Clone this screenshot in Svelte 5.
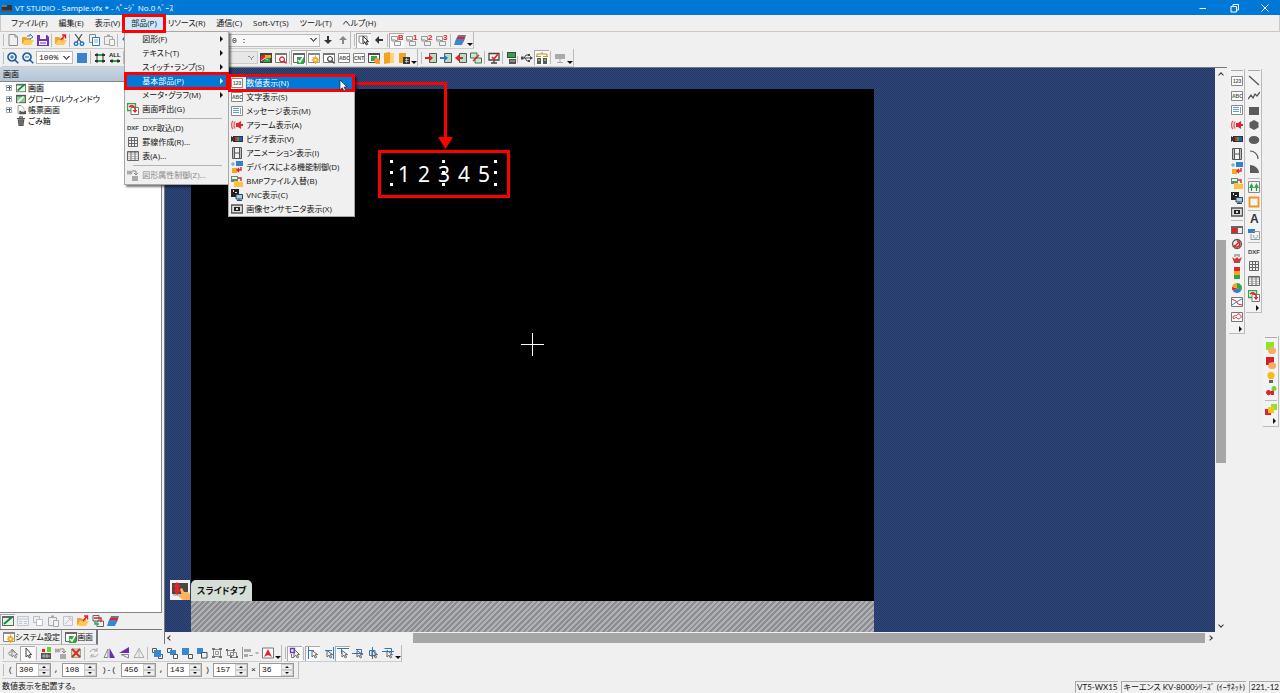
<script lang="ts">
  type Shape = { d?: string; fill?: string; stroke?: string; w?: number; text?: string; x?: number; y?: number; size?: number };

  // shape helpers: fill, line, text
  const f = (d: string, fill: string): Shape => ({ d, fill });
  const l = (d: string, stroke: string, w = 1): Shape => ({ d, fill: 'none', stroke, w });
  const t = (text: string, x: number, y: number, size: number, fill: string): Shape => ({ text, x, y, size, fill });

  const K = '#4d4d4d';
  const G = '#a8a8a8';
  const B = '#2878c8';
  const R = '#e3222b';
  const N = '#2fa544';
  const Y = '#f5a81c';

  const page = l('M2 .5H8L10.5 3V11.5H2ZM8 .5V3H10.5', '#8e8e8e');
  const folder = [f('M0 3H4L5 4H9V6H3L1 10H0Z', '#eda52a'), f('M3 6H12L9 11H1Z', '#ffc95a')];
  const win = (c: string) => [f('M.5 1.5H11.5V10.5H.5Z', '#fff'), l('M.5 1.5H11.5V10.5H.5Z', c), f('M0 1H12V3H0Z', c)];
  const twoPages = (c: string) => [l('M1.5 1.5H7.5V7.5H1.5Z', c), f('M4.5 4.5H10.5V10.5H4.5Z', '#fff'), l('M4.5 4.5H10.5V10.5H4.5Z', c)];
  const cursor = (c: string) => l('M5 2V10L7 8.2L8.3 11L9.6 10.3L8.3 7.6H10.6Z', c);
  const magnifier = [l('M5 1A4 4 0 1 0 5.01 1M8 8L11.3 11.3', '#1c5fa0', 1.6)];
  const screens = (n: string) => [
    l('M.5 2.5H6.5V6.5H.5ZM3.5 7.5H9.5V11.5H3.5Z', '#999'),
    f('M1 5H4V8H1Z', '#bbb'),
    t(n, 7, 6, 8, R),
  ];
  const stack = (a: string, b: string) => [f('M1 1H7V7H1Z', a), f('M5.5 5.5H11V11H5.5Z', b), l('M5.5 5.5H11V11H5.5Z', K)];
  const alignTo = (d: string) => [l(d, B), l('M5 3.5V10L7 8.2L8.3 11L9.6 10.3L8.3 7.6H10.6Z', '#666')];
  const label = (s: string, x: number) => [f('M.5 1.5H11.5V10.5H.5Z', '#fff'), l('M.5 1.5H11.5V10.5H.5Z', '#888'), t(s, x, 8, 5, '#555')];
  const terminal = [l('M4.5 1.5H11.5V10.5H4.5Z', '#555'), f('M5 2H11V10H5Z', '#b8dcc0')];

  const icons: Record<string, Shape[]> = {
    app: [f('M1 3H11V9H1Z', '#333'), f('M1 3H6V5H1Z', '#777'), f('M0 8H12V10H0Z', '#555')],
    minimize: [l('M2.5 6.5H9', '#fff')],
    restore: [l('M3 4.5H8.5V10H3ZM5 4.5V2.5H10.5V8H8.5', '#fff')],
    close: [l('M2.5 2.5L9.5 9.5M9.5 2.5L2.5 9.5', '#fff')],
    new: [page],
    open: [...folder, l('M5 2H8V0L11 3L8 5', B)],
    save: [f('M0 1H10L12 3V12H0Z', '#6e36b4'), f('M3 1H9V5H3ZM2 7H10V11H2Z', '#f6f1fb'), l('M3 9H9', '#6e36b4')],
    import: [...folder, l('M6 6L10 1M7 1H10.5V4.5', R, 1.4)],
    cut: [l('M2 0L8 8M9 0L4 8', K, 1.2), l('M3 8A1.7 1.7 0 1 0 3.01 8M9 8A1.7 1.7 0 1 0 9.01 8', B, 1.4)],
    copy: [l('M1.5.5H7.5V8.5H1.5Z', '#8a8a8a'), f('M4.5 3.5H11.5V11.5H4.5Z', '#fff'), l('M4.5 3.5H11.5V11.5H4.5Z', B), l('M6 6H10M6 8H10', '#8ab')],
    paste: [l('M1.5 2.5H9.5V10.5H1.5Z', G), l('M4 1.5H7', G, 2), f('M6.5 5.5H11.5V11.5H6.5Z', '#f4f4f4'), l('M6.5 5.5H11.5V11.5H6.5Z', G)],
    undo: [l('M10 10C11 4 6 3 2 5M5 2L2 5L5 8', B, 1.4)],
    redo: [l('M2 10C1 4 6 3 10 5M7 2L10 5L7 8', B, 1.4)],
    down: [l('M6 2V7', '#333', 2), f('M2 6H10L6 10Z', '#333')],
    up: [l('M6 10V5', '#888', 2), f('M2 6H10L6 2Z', '#888')],
    left: [l('M10 6H5', '#333', 2), f('M6 2V10L2 6Z', '#333')],
    picker: [l('M1 2H9V8M1 2V8L4 10', '#888'), cursor('#333'), l('M4 5L10 11', '#777')],
    screenB: screens('B'),
    screen1: screens('1'),
    screen2: screens('2'),
    screen3: screens('3'),
    layers: [f('M4 1H12L10 7H2Z', '#777'), f('M3 3H11L9 9H1Z', R), f('M2 5H10L8 11H0Z', '#3688d4')],
    zoomin: [...magnifier, l('M3 5H7M5 3V7', '#1c5fa0')],
    zoomout: [...magnifier, l('M3 5H7', '#1c5fa0')],
    blue: [f('M1 1H11V11H1Z', '#3c82cf')],
    fit: [l('M1 3H4M8 3H11M1 9H4M8 9H11', '#333', 2), l('M4 3H8M4 9H8', N, 2), l('M3 1V11M9 1V11', '#333')],
    all: [t('ALL', 0, 5, 6, '#222'), l('M1 9H4M8 9H11', '#333', 2), l('M4 9H8', N, 2), l('M3 7V11M9 7V11', '#333')],
    color: [f('M0 1H12V11H0Z', '#454545'), f('M1 4L5 2V8H1Z', R), f('M5 3H11V6H5Z', Y), f('M5 7L10 6V10H3Z', N), l('M1 9L5 6L8 8', '#fff', .8)],
    find: [...win('#777'), l('M7 5A2.4 2.4 0 1 0 7.01 5M9 9L11.5 11.5', R, 1.3)],
    check: [...win('#666'), f('M4 5H11V12H4Z', N), l('M5 8L7 10L10 5', '#fff', 1.5)],
    gear: [...win('#888'), l('M7.5 6A2 2 0 1 0 7.51 6', Y, 1.8), l('M7.5 3.5V5M7.5 11V12M3.5 8H5M10 8H12M4.5 5L5.5 6M9.5 10L10.5 11', Y)],
    search: [...win('#777'), l('M7 4.5A2.4 2.4 0 1 0 7.01 4.5M9 9L11.5 11.5', '#444', 1.2)],
    abc: label('ABC', 1),
    cnt: label('CNT', 1),
    num: label('123', 2),
    touch: [...win(K), f('M3 4H9V9H3Z', N), f('M7 6H10L12 8V12H8L6 9Z', '#f79a35')],
    book: [f('M1 1L7 0V11L1 12Z', '#f2a41f'), f('M7 1H11V11H7Z', '#ffd27a')],
    locked: [f('M1 1H8V11H1Z', '#f2a41f'), f('M5 5H12V12H5Z', '#3b3b3b'), l('M7 7.5H10.5M7 9.5H10.5M8.5 6V11', '#ddd', .7)],
    toIn: [...terminal, l('M0 6H5', R, 2), f('M4 2.5L8 6L4 9.5Z', R)],
    toOut: [...terminal, l('M0 6H5', B, 2), f('M4 2.5L8 6L4 9.5Z', B)],
    fromIn: [...terminal, l('M3 6H8', R, 2), f('M4 2.5L0 6L4 9.5Z', R)],
    verify: [f('M1 1H7V6H1ZM5 6H11V11H5Z', '#cde8d1'), l('M.5 1H7V6H.5ZM5 6H11.5V11H5Z', '#3f6f50'), l('M3 9L9 3', R, 1.4)],
    monitor: [l('M1 1.5H11V8H1ZM6 8V11M3 11H9', '#444', 1.3), l('M4 5L6 7L10 2', R, 1.6)],
    transfer: [f('M1 0H10V6H1Z', '#444'), f('M2 1H9V5H2Z', N), f('M3 7H10V12H3Z', '#555'), l('M4 9H9M11.5 4V11', '#bbb')],
    usb: [l('M0 6H10M3 6L5 3H8M4 6L6 9H8', '#444'), f('M9 4L12 6L9 8ZM0 4.5H2.5V7.5H0ZM7 2H9V4H7ZM7 8H9V10H7Z', '#444')],
    lan: [l('M1 4V2H11V4M6 2V0M0 4.5H5M7 4.5H12', '#c29328'), f('M1 6H5V12H1ZM7 6H11V12H7Z', '#4d5f4f'), l('M2 8H4M8 8H10', '#ddd')],
    device: [f('M1 2H11V7H1Z', '#aaa'), l('M6 7V10M3 10.5H9', '#aaa')],
    message: [f('M.5 1.5H11.5V10.5H.5Z', '#fff'), l('M.5 1.5H11.5V10.5H.5Z', '#888'), l('M2 3.5H8M2 5.5H8M2 7.5H8', '#5b9bd8'), l('M9.5 3V9', '#999')],
    alarm: [l('M2 2C0 4 0 8 2 10M4 2.5C2.5 5 2.5 7 4 9.5', '#ef5a60', 1.4), f('M5 4H7L10 2V10L7 8H5ZM10 5H12V7H10Z', R)],
    video: [f('M0 3L3 5V7L0 9ZM2 3H12V9H2Z', '#333'), f('M4 4H6V8H4Z', R), f('M6 4H8.5V8H6Z', N), f('M8.5 4H11V8H8.5Z', '#2656d0')],
    film: [l('M1.5.5H10.5V11.5H1.5ZM3.5.5V11.5M8.5.5V11.5M3.5 6H8.5', '#555'), l('M2.5 1V11M9.5 1V11', '#999', .6)],
    deviceCtl: [f('M5 0H12V5H5Z', '#2f82d2'), f('M1 7H6V12H1Z', '#f5a81c'), l('M0 3H4M2 1V5', '#5b9bd8'), l('M10 6V9H6M8 7L6 9L8 11', R, 1.4)],
    bmp: [f('M0 1H7V7H0Z', '#5c8f63'), f('M1 2H6V4H1Z', '#eef'), f('M3 6H7L8 7H12V12H3Z', '#ffc13c'), l('M7 3H10V6', R, 1.4)],
    vnc: [f('M0 0H8V8H0Z', '#222'), f('M2 1H3V3H2ZM4 3H6V4H4Z', '#ddd'), f('M5 5H12V10H5Z', '#9fd0ea'), l('M5 5.5H11.5V10H5ZM8 10V12M6 11.5H11', '#345')],
    sensor: [f('M.5 2H11.5V10H.5Z', '#ddd'), l('M.5 2H11.5V10H.5Z', '#555', 1.3), f('M3 4H9V8H3Z', '#222'), f('M5 5H7V7H5Z', '#ddd')],
    callScreen: [l('M.5.5H8.5V7.5H.5Z', N, 1.3), f('M4 4.5H11.5V11.5H4Z', '#fff'), l('M4 4.5H11.5V11.5H4Z', '#777'), l('M2 4C6 1 9 5 8 8', R, 1.5), f('M5.5 7H10.5L8 10Z', R)],
    dxf: [t('DXF', 0, 8, 6, '#444')],
    grid: [l('M1.5 1.5H10.5V10.5H1.5ZM4.5 1V11M7.5 1V11M1 4.5H11M1 7.5H11', '#666')],
    table: [f('M1 1H11V3H1Z', '#aaa'), l('M.5 1.5H11.5V10.5H.5ZM4 1V11M8 1V11', '#666'), l('M1 4H11M1 6.5H11M1 8.5H11', '#999', .6)],
    attr: [f('M2 2A2 2 0 1 1 2 5A2 2 0 1 1 2 2M5 7H11V12H5Z', '#aaa'), l('M5 2H9V5M7 4L9 6L11 4', '#888')],
    screenEdit: [f('M0 1H12V11H0Z', '#666'), f('M1 3H11V10H1Z', '#e2f8e5'), l('M2 9L10 2', '#168b38', 2)],
    screenEditAlt: [f('M0 1H12V11H0Z', '#555'), f('M1 3H11V10H1Z', '#7ed28c'), l('M2 10L9 3', '#fff', 2)],
    report: [l('M2.5.5H6L9.5 4V10.5H2.5Z', '#888'), f('M4 7H12V11H4Z', '#555'), f('M6 5H10V8H6Z', '#eee')],
    trash: [f('M2 4H10L9 12H3Z', '#555'), l('M1 3H11M4.5 2.5V1H7.5V2.5', '#555', 1.3), l('M4.5 5V11M6 5V11M7.5 5V11', '#999', .6)],
    listOff: [l('M.5 1.5H11.5V10.5H.5ZM1 4H11M2 6.5H5M2 8.5H5M7 6.5H10M7 8.5H10', '#c0c7d4')],
    pagesOff: twoPages('#b7bccb'),
    editOff: [l('M1.5 1.5H10.5V10.5H1.5ZM3 9L9 3M6 3H9V6', '#c0c4cf')],
    swap: [l('M1 .5H7V6H1ZM5 6H11.5V11.5H5Z', '#666'), l('M2 3H9V7', R, 1.4), l('M3 6V9H7', N, 1.4)],
    pointOff: [l('M1 7L5 3L8 6M2 8H5', G, 1.5), cursor('#888')],
    point: [l('M4 1V10L6 8.2L7.3 11L8.6 10.3L7.3 7.6H9.6Z', '#444')],
    addParts: [f('M1 6H11V12H1Z', '#555'), f('M2 2H5V5H2Z', R), f('M7 0H11V5H7Z', '#6bd02c'), l('M2 9H10M4 7V11M7 7V11', '#ddd', .7)],
    del: [f('M1 2H11V11H1Z', '#c6e4b8'), l('M1.5 2H10.5V10.5H1.5Z', '#9a8'), l('M2 2L10 10M10 2L2 10', R, 1.8)],
    rotate: [l('M2 5C4 1 8 2 9 4M10 7C8 11 4 10 3 8M9 1V4H6M3 11V8H6', G)],
    flipH: [l('M5 2V10.5H1Z', '#888'), f('M6.5 1V11H12Z', '#6a2db2')],
    flipV: [f('M11 0V6H1Z', '#6a2db2'), l('M10.5 7.5V11L3 7.5Z', '#888')],
    triangle: [l('M6 1.5L11 10.5H1Z', '#aaa'), l('M6 1V11', '#bbb')],
    stackFront: [l('M1.5 1.5H5.5V5.5H1.5ZM7.5 7.5H11.5V11.5H7.5Z', '#555'), f('M3 3H10V10H3Z', '#3688d4')],
    stackBack: [f('M1 1H8V8H1Z', '#3688d4'), f('M7 7H11V11H7Z', '#fff'), l('M7.5 7.5H11.5V11.5H7.5Z', '#555')],
    stackUp: [l('M1.5 1.5H5.5V5.5H1.5Z', '#555'), f('M4 3H10V8H4Z', '#3688d4'), f('M7 7H11V11H7Z', '#fff'), l('M7.5 7.5H11.5V11.5H7.5Z', '#555')],
    stackDown: stack('#3688d4', '#f0f0f0'),
    group: [l('M2.5 2.5H9.5V9.5H2.5Z', '#888'), f('M1 1H4V3H1ZM8 1H11V3H8ZM1 9H4V11H1ZM8 9H11V11H8Z', '#777'), l('M4.5 4.5H7.5V7.5H4.5Z', '#999')],
    ungroup: [l('M1.5 3.5H7.5V8.5H1.5ZM4.5 5.5H10.5V10.5H4.5Z', '#888'), f('M0 2H2V4H0ZM7 2H9V4H7ZM10 9H12V11H10ZM4 9H6V11H4Z', '#666')],
    alignOff: [l('M1.5 0V12', '#999'), f('M3 2H10V5H3ZM3 7H7V10H3Z', '#aaa'), l('M8 8.5H12', '#999')],
    mini: [f('M3 5H9V7H3Z', '#777')],
    alert: [f('M.5 1H11.5V11H.5Z', '#fff'), l('M.5 1H11.5V11H.5Z', '#777'), f('M6 2L8 6L10 10L6 8L2 10L4 6Z', R)],
    purplePick: [l('M1.5 1.5H5.5V5.5H1.5Z', '#6a2ddd', 1.3), l('M2.5 7V10.5H5', '#777'), cursor('#666')],
    alignL: alignTo('M1.5 0V12M2 3.5H7'),
    alignR: alignTo('M11.5 0V12M3 3.5H10'),
    alignT: alignTo('M0 1.5H12M4.5 2V7'),
    alignM: alignTo('M0 6.5H11M4 2.5H9.5V6'),
    alignC: alignTo('M5.5 0V12M2.5 3.5H8V8.5H2.5Z'),
    alignB: alignTo('M0 4.5H12M2.5 1.5H9.5V6'),
    line: [l('M1 1L11 10', '#555', 1.3)],
    poly: [l('M0 9L3 5L5 8L7 4L9 6L12 2', '#555', 1.3)],
    rect: [f('M1 2H11V10H1Z', '#5c5c5c')],
    hexagon: [f('M6 1L10.5 3.5V8.5L6 11L1.5 8.5V3.5Z', '#5c5c5c')],
    ellipse: [f('M6 2C13 2 13 10 6 10C-1 10 -1 2 6 2Z', '#5c5c5c')],
    arc: [l('M2 2C6 2 10 5 10 10', '#555', 1.2)],
    sector: [f('M2 2C7 2 11 6 11 10H2Z', '#5c5c5c')],
    switches: [l('M.5.5H11.5V11.5H.5Z', '#888'), l('M3.5 4V10M8.5 4V10', '#2b8b3d', 1.2), f('M1 7L3.5 2L6 7L8.5 2L11 7Z', N)],
    frame: [l('M1.5 1.5H10.5V10.5H1.5Z', '#ee9420', 1.8)],
    letter: [t('A', 2, 10, 12, '#333')],
    imageFile: [f('M0 1H7V5H0Z', '#2f7fd0'), l('M5 3.5H11.5V11.5H3V6', '#999'), l('M6 7A2 2 0 1 0 9 7', '#8ab')],
    lamp: [f('M0 2H12V10H0Z', '#666'), f('M1 4H6V9H1Z', R), f('M7 4H11V9H7Z', '#eee')],
    meter: [l('M6 1.5A4.5 4.5 0 1 0 6.01 1.5', '#555', 1.3), l('M6 3A3 3 0 1 1 3 7M4 8L8 4', R, 1.6)],
    gauge: [f('M1 4L3 9H9L11 4L8 6L6 4L4 6Z', '#d33'), l('M3 9.5H9M4 1V4M8 1V4M6 1V3', '#666')],
    level: [f('M3 0H9V4H3Z', R), f('M3 4H9V8H3Z', Y), f('M3 8H9V12H3Z', N)],
    pie: [f('M6 6V1A5 5 0 0 1 10.5 8Z', N), f('M6 6L10.5 8A5 5 0 0 1 2 9Z', '#2f7fd0'), f('M6 6L2 9A5 5 0 0 1 1 5Z', R), f('M6 6L1 5A5 5 0 0 1 6 1Z', Y)],
    trend: [f('M.5 1.5H11.5V10.5H.5Z', '#fff'), l('M.5 1.5H11.5V10.5H.5Z', '#777'), l('M1 3L5 5L7 8L11 9', R), l('M1 9L4 7L7 5L11 3', '#2f7fd0')],
    xy: [f('M.5 1.5H11.5V10.5H.5Z', '#fff'), l('M.5 1.5H11.5V10.5H.5Z', '#777'), l('M2 7C2 3 5 6 6 4S9 3 10 5S7 9 6 7S3 9 2 7', R)],
    handGreen: [f('M1 0H9V8H1Z', '#8be62a'), f('M4 6L8 5L11 7V10L9 12H5L3 10Z', '#f8ac64')],
    handRed: [f('M1 0H9V8H1Z', '#d51f29'), f('M4 6L8 5L11 7V10L9 12H5L3 10Z', '#f8ac64')],
    bulb: [f('M6 1C11 1 10 6 8 8H4C2 6 1 1 6 1Z', '#f7bd16'), f('M4 9H8V12H4Z', '#666')],
    lamps: [l('M3 9L10 3', '#777', 2), f('M3.5 4A2.5 2.5 0 1 0 3.51 4M6 5H9V9H6Z', R), f('M9 0A2.5 2.5 0 1 0 9.01 0', '#72d334')],
    squares: [f('M6 0H12V6H6Z', '#8be62a'), f('M0 5H6V11H0Z', R), f('M3 3H9V9H3Z', '#f7c516')],
  };

  type Tool = string | { i: string; on: boolean };
  const on = (i: string) => ({ i, on: true });
  const SEP = '|';
  const MORE = 'v';

  const fileBar: Tool[] = ['new', 'open', 'save', SEP, 'import', SEP, 'cut', 'copy', 'paste', SEP, 'undo', 'redo', 'find', SEP, 'copy', 'paste', 'grid', 'table'];
  const pageBar: Tool[] = ['down', 'up'];
  const screenBar: Tool[] = [on('picker'), 'left', SEP, on('screenB'), 'screen1', 'screen2', 'screen3', SEP, 'layers', MORE];
  const viewBar: Tool[] = ['blue', SEP, 'fit', 'all', SEP, 'grid', 'table', 'find', 'search', 'abc', 'cnt'];
  const showBar: Tool[] = ['color', 'find', SEP, on('check'), on('gear'), 'search', 'abc', 'cnt', 'touch', 'book', 'locked', MORE];
  const transferBar: Tool[] = ['toIn', 'toOut', 'fromIn', 'verify', SEP, 'monitor', SEP, 'transfer', 'usb', on('lan'), SEP, 'device', MORE];
  const editBar: Tool[] = ['pointOff', on('point'), SEP, 'addParts', 'attr', 'del', SEP, 'rotate', 'flipH', 'flipV', 'triangle', SEP, 'stackFront', 'stackUp', 'stackBack', 'stackDown', 'group', 'ungroup', 'alignOff', 'mini', 'alert', MORE];
  const alignBar: Tool[] = [on('purplePick'), SEP, on('alignL'), 'alignR', on('alignT'), 'alignM', 'alignC', 'alignB', MORE];
  const treeBar: Tool[] = [on('screenEdit'), 'listOff', 'pagesOff', 'paste', 'editOff', 'import', 'swap', 'layers'];

  const partsPalette: Tool[] = ['num', 'abc', 'message', 'alarm', 'video', 'film', 'deviceCtl', 'bmp', 'vnc', 'sensor', SEP, 'lamp', 'meter', 'gauge', 'level', 'pie', 'trend', 'xy', '>'];
  const shapePalette: Tool[] = ['line', 'poly', 'rect', 'hexagon', 'ellipse', 'arc', 'sector', SEP, 'switches', 'frame', SEP, 'letter', 'imageFile', SEP, 'dxf', 'grid', 'table', 'callScreen', '>'];
  const lampPalette: Tool[] = ['handGreen', 'handRed', 'bulb', 'lamps', SEP, 'squares', '>'];

  const menus = ['ファイル(F)', '編集(E)', '表示(V)', '部品(P)', 'リソース(R)', '通信(C)', 'Soft-VT(S)', 'ツール(T)', 'ヘルプ(H)'];

  const partsMenu = [
    { label: '図形(F)', sub: true },
    { label: 'テキスト(T)', sub: true },
    { label: 'スイッチ・ランプ(S)', sub: true },
    { label: '基本部品(P)', sub: true, open: true },
    { label: 'メータ・グラフ(M)', sub: true },
    { label: '画面呼出(G)', icon: 'callScreen' },
    null,
    { label: 'DXF取込(D)', icon: 'dxf' },
    { label: '罫線作成(R)...', icon: 'grid' },
    { label: '表(A)...', icon: 'table' },
    null,
    { label: '図形属性制御(Z)...', icon: 'attr', disabled: true },
  ];

  const basicParts = [
    ['num', '数値表示(N)'],
    ['abc', '文字表示(S)'],
    ['message', 'メッセージ表示(M)'],
    ['alarm', 'アラーム表示(A)'],
    ['video', 'ビデオ表示(V)'],
    ['film', 'アニメーション表示(I)'],
    ['deviceCtl', 'デバイスによる機能制御(D)'],
    ['bmp', 'BMPファイル入替(B)'],
    ['vnc', 'VNC表示(C)'],
    ['sensor', '画像センサモニタ表示(X)'],
  ];

  const tree = [
    { icon: 'screenEdit', label: '画面', expand: true, current: true },
    { icon: 'screenEditAlt', label: 'グローバルウィンドウ', expand: true },
    { icon: 'report', label: '帳票画面', expand: true },
    { icon: 'trash', label: 'ごみ箱' },
  ];

  const coords = [
    { before: '(', value: 300, name: 'X1' },
    { before: ',', value: 108, name: 'Y1' },
    { before: ')-(', value: 456, name: 'X2', wide: true },
    { before: ',', value: 143, name: 'Y2' },
    { before: ')', value: 157, name: 'W' },
    { before: '×', value: 36, name: 'H' },
  ];

  let selected = $state(0);
</script>

{#snippet icon(name: string)}
  <svg class="icon" viewBox="0 0 12 12" aria-hidden="true">
    {#each icons[name] as s}
      {#if s.text}
        <text x={s.x} y={s.y} font-size={s.size} fill={s.fill}>{s.text}</text>
      {:else}
        <path d={s.d} fill={s.fill} stroke={s.stroke} stroke-width={s.w} />
      {/if}
    {/each}
  </svg>
{/snippet}

{#snippet tools(list: Tool[])}
  {#each list as tool}
    {#if tool === SEP}
      <span class="sep"></span>
    {:else if tool === MORE}
      <button class="more" aria-label="more"></button>
    {:else if tool === '>'}
      <button class="more side" aria-label="more"></button>
    {:else if tool === 'mini'}
      <button class="tool mini" aria-label="mini">{@render icon('mini')}</button>
    {:else if typeof tool === 'string'}
      <button class="tool" aria-label={tool}>{@render icon(tool)}</button>
    {:else}
      <button class="tool on" aria-label={tool.i}>{@render icon(tool.i)}</button>
    {/if}
  {/each}
{/snippet}

<div class="app">
  <header class="title">
    {@render icon('app')}
    <span class="name">VT STUDIO - Sample.vfx * - ﾍﾟｰｼﾞ No.0 ﾍﾞｰｽ</span>
    <button aria-label="minimize">{@render icon('minimize')}</button>
    <button aria-label="restore">{@render icon('restore')}</button>
    <button aria-label="close">{@render icon('close')}</button>
  </header>

  <nav class="menubar">
    {#each menus as label, i}
      <div class="menu" class:open={i === 3} class:marked={i === 3}>
        <button>{label}</button>
        {#if i === 3}
          <ul class="popup">
            {#each partsMenu as item}
              {#if item}
                <li class:marked={item.open}>
                  <button class:active={item.open} disabled={item.disabled}>
                    <span class="slot">{#if item.icon}{@render icon(item.icon)}{/if}</span>
                    <span>{item.label}</span>
                    {#if item.sub}<i class="arrow"></i>{/if}
                  </button>
                  {#if item.open}
                    <ul class="popup sub">
                      {#each basicParts as [name, text], n}
                        <li class:marked={n === 0}>
                          <button class:active={n === selected} onmouseenter={() => (selected = n)}>
                            <span class="slot plain">{@render icon(name)}</span>
                            <span>{text}</span>
                          </button>
                          {#if n === 0}
                            <svg class="pointer" viewBox="0 0 9 13">
                              <path d="M1 1V11L3.3 8.8L5 12L6.6 11.2L5 8H8Z" fill="#fff" stroke="#222" stroke-width=".7" />
                            </svg>
                          {/if}
                        </li>
                      {/each}
                    </ul>
                  {/if}
                </li>
              {:else}
                <li class="rule"></li>
              {/if}
            {/each}
          </ul>
        {/if}
      </div>
    {/each}
  </nav>

  <div class="row">
    <div class="bar">
      {@render tools(fileBar)}
      <select class="page-select" aria-label="page"><option>0 :</option></select>
      {@render tools(pageBar)}
    </div>
    <div class="bar">{@render tools(screenBar)}</div>
  </div>
  <div class="row">
    <div class="bar">
      <button class="tool" aria-label="zoom in">{@render icon('zoomin')}</button>
      <button class="tool" aria-label="zoom out">{@render icon('zoomout')}</button>
      <select class="zoom-select" aria-label="zoom"><option>100%</option></select>
      {@render tools(viewBar)}
      <select class="state-select" aria-label="state" disabled><option></option></select>
      {@render tools(showBar)}
    </div>
    <div class="bar">{@render tools(transferBar)}</div>
  </div>

  <main>
    <aside class="explorer">
      <h2>画面</h2>
      <ul class="tree">
        {#each tree as node}
          <li class:current={node.current}>
            <span class="expand" class:shown={node.expand}></span>
            {@render icon(node.icon)}
            <span>{node.label}</span>
          </li>
        {/each}
      </ul>
      <div class="tree-tools">{@render tools(treeBar)}</div>
      <div class="tabs">
        <button>{@render icon('gear')}システム設定</button>
        <button class="current">{@render icon('check')}画面</button>
      </div>
    </aside>

    <section class="workspace">
      <div class="viewport">
        <div class="screen">
          <div class="number-part">
            {#each '12345' as digit}<span>{digit}</span>{/each}
            <svg class="handles" viewBox="0 0 107 28">
              {#each [0, 52, 104] as x}
                {#each [1, 12, 24] as y}
                  <rect {x} {y} width="3" height="3" fill="#fff" />
                {/each}
              {/each}
            </svg>
          </div>
          <svg class="cross" viewBox="0 0 23 23"><path d="M11.5 0V23M0 11.5H23" stroke="#fff" /></svg>
          <div class="slide-tab">
            <span class="slide-icon">
              <svg viewBox="0 0 20 20">
                <path d="M2 3H18V14H2Z" fill="#484848" />
                <path d="M3 15H18" stroke="#888" />
                <path d="M7 2L11 7H9V10H11L7 15L3 10H5V7H3Z" fill="#e3222b" />
                <path d="M10 9L12 8L14 12H18L20 14V20H13L8 16L9 15L12 16Z" fill="#ffb45a" />
              </svg>
            </span>
            <button>スライドタブ</button>
          </div>
        </div>
        <div class="hatch"></div>
        <svg class="callout" viewBox="0 0 110 82">
          <path d="M0 15.5H91.5V70" fill="none" stroke="#f00" stroke-width="3" />
          <path d="M84 69H99L91.5 81Z" fill="#f00" />
        </svg>
      </div>
      <div class="scroll vertical">
        <i class="chev up"></i>
        <div class="track"><span class="thumb"></span></div>
        <i class="chev down"></i>
      </div>
      <div class="scroll horizontal">
        <i class="chev left"></i>
        <div class="track"><span class="thumb"></span></div>
        <i class="chev right"></i>
      </div>
    </section>

    <aside class="dock">
      <div class="palette parts">{@render tools(partsPalette)}</div>
      <div class="palette shapes">{@render tools(shapePalette)}</div>
      <div class="palette lamps">{@render tools(lampPalette)}</div>
    </aside>
  </main>

  <div class="row">
    <div class="bar">{@render tools(editBar)}</div>
    <div class="bar">{@render tools(alignBar)}</div>
  </div>
  <div class="row">
    <div class="bar coords">
      {#each coords as c}
        <span class="mark" class:wide={c.wide}>{c.before}</span>
        <span class="spin">
          <input type="text" aria-label={c.name} value={c.value} />
          <span class="steps">
            <button aria-label="increase {c.name}"></button>
            <button aria-label="decrease {c.name}"></button>
          </span>
        </span>
      {/each}
    </div>
  </div>

  <footer>
    <span class="hint">数値表示を配置する。</span>
    <span class="cell">VT5-WX15</span>
    <span class="cell">キーエンス KV-8000ｼﾘｰｽﾞ (ｲｰｻﾈｯﾄ)</span>
    <span class="cell">221,-12</span>
  </footer>
</div>

<style>
  :global(body) {
    margin: 0;
  }

  .app {
    display: flex;
    flex-direction: column;
    height: 100vh;
    min-height: 480px;
    overflow: hidden;
    background: #f0f0f0;
    color: #111;
    font: 8px/14px 'Open Sans', 'Noto Sans CJK JP', sans-serif;
    font-feature-settings: 'palt';
  }

  button,
  input,
  select {
    font: inherit;
    font-feature-settings: inherit;
    color: inherit;
    padding: 0;
    margin: 0;
    border: 0;
    background: none;
    box-sizing: border-box;
  }

  ul {
    list-style: none;
    margin: 0;
    padding: 0;
  }

  .icon {
    width: 12px;
    height: 12px;
    flex: none;
    display: block;
  }

  .icon text {
    font-family: 'Liberation Sans', sans-serif;
    font-weight: bold;
  }

  .title {
    display: flex;
    align-items: center;
    height: 15px;
    padding-left: 1px;
    background: #0078d7;
    color: #fff;
  }

  .title .name {
    flex: 1;
    padding-left: 2px;
  }

  .title button {
    display: grid;
    place-items: center;
    width: 31px;
    height: 15px;
  }

  .menubar {
    display: flex;
    height: 17px;
    box-sizing: border-box;
    padding-left: 5px;
    border: solid #c8c8c8;
    border-width: 0 1px 1px;
  }

  .menu {
    position: relative;
  }

  .menu > button {
    height: 16px;
    padding: 0 6px 0 5px;
    white-space: nowrap;
  }

  .menu.open > button {
    background: #cce8ff;
  }

  .marked {
    position: relative;
  }

  .marked::after {
    content: '';
    position: absolute;
    inset: -2px -1px;
    border: 3px solid #f00;
    pointer-events: none;
    z-index: 3;
  }

  .menu.marked::after {
    inset: -1px -3px -2px -4px;
  }

  .popup {
    position: absolute;
    top: 100%;
    left: -2px;
    z-index: 2;
    width: 105px;
    box-sizing: border-box;
    padding-bottom: 2px;
    border: 1px solid #a8a8a8;
    background: #f0f0f0;
    box-shadow: 2px 2px 2px #0008;
  }

  .popup button {
    display: flex;
    align-items: center;
    width: 100%;
    height: 14px;
    text-align: left;
    white-space: nowrap;
  }

  .popup button.active {
    background: #0078d7;
    color: #fff;
  }

  .popup button:disabled {
    color: #888;
  }

  .popup .slot {
    width: 13px;
    padding: 0 2px;
  }

  .popup .plain {
    background: #f0f0f0;
  }

  .sub .slot {
    width: 14px;
    padding: 1px 1px 1px 2px;
  }

  .popup.sub {
    top: 1px;
    left: 100%;
    width: 127px;
    padding-bottom: 0;
  }

  .rule {
    height: 1px;
    margin: 2px 6px 2px 8px;
    background: #b4b4b4;
  }

  .arrow {
    margin-left: auto;
    margin-right: 5px;
    border: solid transparent;
    border-width: 3px 0 3px 3px;
    border-left-color: currentColor;
  }

  .pointer {
    position: absolute;
    top: 3px;
    left: 110px;
    width: 9px;
    height: 13px;
    z-index: 4;
  }

  .row {
    display: flex;
    gap: 2px;
    height: 17px;
    padding-left: 2px;
  }

  .row:nth-of-type(2) {
    height: 18px;
  }

  .bar {
    display: flex;
    align-items: center;
    padding-left: 1px;
    border-right: 1px solid #bbb;
    border-bottom: 1px solid #ccc;
  }

  .bar::before {
    content: '';
    width: 1px;
    height: 12px;
    margin-right: 1px;
    background: #bbb;
  }

  .tool {
    display: grid;
    place-items: center;
    width: 15px;
    height: 15px;
    flex: none;
  }

  .tool.on {
    background: #fafafa;
    box-shadow: inset 1px 1px #aaa;
  }

  .tool.mini {
    width: 6px;
    overflow: hidden;
  }

  .tool.mini .icon {
    width: 6px;
  }

  .sep {
    width: 1px;
    height: 13px;
    margin: 0 1px;
    background: #bbb;
  }

  .more {
    width: 6px;
    height: 12px;
    display: grid;
    place-items: end center;
  }

  .more::before {
    content: '';
    border: solid transparent;
    border-width: 3px 3px 0;
    border-top-color: #111;
  }

  .more.side::before {
    border-width: 3px 0 3px 3px;
    border-color: transparent transparent transparent #111;
  }

  select {
    appearance: none;
    height: 13px;
    padding-left: 4px;
    border: 1px solid #bbb;
    font-family: 'Liberation Mono', monospace;
    background:
      linear-gradient(45deg, transparent 50%, #666 50% 65%, transparent 65%) right 5px center / 4px 4px no-repeat,
      linear-gradient(-45deg, transparent 50%, #666 50% 65%, transparent 65%) right 2px center / 4px 4px no-repeat,
      #f7f7f7;
    line-height: 11px;
  }

  .page-select {
    width: 93px;
  }

  .zoom-select {
    width: 37px;
    margin: 0 1px;
    padding-left: 2px;
    background-color: #fff;
  }

  .state-select {
    width: 43px;
    background-color: #e4e4e4;
  }

  main {
    flex: 1;
    min-height: 0;
    display: flex;
  }

  .explorer {
    display: flex;
    flex-direction: column;
    width: 162px;
  }

  .explorer h2 {
    margin: 0;
    height: 14px;
    padding-left: 3px;
    font: inherit;
    background: linear-gradient(#c9d6e4, #b4c5d7);
    color: #000;
  }

  .tree {
    flex: 1;
    padding-left: 6px;
    border: solid #828790;
    border-width: 1px 1px 1px 0;
    background: #fff;
    color: #000;
  }

  .tree li {
    display: flex;
    align-items: center;
    height: 11px;
    line-height: 11px;
    gap: 2px;
  }

  .tree .icon {
    width: 10px;
    height: 10px;
    margin-left: 2px;
  }

  .tree .current span:last-child {
    background: #eaeaea;
  }

  .expand {
    width: 6px;
    height: 6px;
    box-sizing: border-box;
  }

  .expand.shown {
    border: 1px solid #aaa;
    background:
      linear-gradient(#3a5fa0, #3a5fa0) center / 4px 1px no-repeat,
      linear-gradient(#3a5fa0, #3a5fa0) center / 1px 4px no-repeat;
  }

  .tree-tools {
    display: flex;
    align-items: center;
    height: 16px;
  }

  .tabs {
    display: flex;
    height: 15px;
    border-top: 1px solid #777;
  }

  .tabs button {
    display: flex;
    align-items: center;
    padding: 0 1px 0 3px;
    border-right: 1px solid #999;
    border-bottom: 1px solid #bbb;
  }

  .tabs .current {
    padding-right: 3px;
    border-right: 2px solid #777;
  }

  .workspace {
    flex: 1;
    min-width: 0;
    display: grid;
    grid-template: 1fr 12px / 1fr 12px;
    margin: 0 0 1px 2px;
    border: solid #777;
    border-width: 1px 0 0 1px;
  }

  .viewport {
    position: relative;
    overflow: hidden;
    padding: 21px 0 0 26px;
    background: repeating-conic-gradient(#1f3765 0 25%, #34487a 0 50%) 0 0 / 2px 2px;
  }

  .screen {
    position: relative;
    width: 683px;
    height: 512px;
    background: #000;
  }

  .hatch {
    width: 683px;
    height: 40px;
    background: repeating-linear-gradient(135deg, #8b8d91 0 2px, #b0b1b4 2px 4px);
  }

  .number-part {
    position: absolute;
    top: 61px;
    left: 187px;
    display: grid;
    grid-template-columns: repeat(5, 20px);
    box-sizing: border-box;
    width: 132px;
    padding: 8px 15px 8px 13px;
    border: 3px solid #f00;
    color: #fff;
    font-family: 'Noto Sans', sans-serif;
    font-size: 21px;
    line-height: 26px;
    text-align: center;
  }

  .handles {
    position: absolute;
    top: 6px;
    left: 9px;
    width: 107px;
    height: 28px;
  }

  .cross {
    position: absolute;
    top: 244px;
    left: 330px;
    width: 23px;
    height: 23px;
  }

  .slide-tab {
    position: absolute;
    left: -21px;
    bottom: 0;
    display: flex;
  }

  .slide-tab button {
    height: 21px;
    padding: 0 6px;
    border-radius: 5px 5px 0 0;
    background: #d5dfd5;
    font-size: 9px;
    font-weight: bold;
  }

  .slide-icon {
    width: 20px;
    height: 20px;
    margin-right: 1px;
    background: #f4f0f4;
  }

  .callout {
    position: absolute;
    top: 0;
    left: 189px;
    width: 110px;
    height: 82px;
  }

  .scroll {
    display: flex;
    align-items: center;
    background: #f0f0f0;
  }

  .vertical {
    flex-direction: column;
    padding: 2px 0;
  }

  .track {
    display: flex;
    flex: 1;
  }

  .vertical .track {
    flex-direction: column;
  }

  .track::before {
    content: '';
    flex: 238;
  }

  .vertical .track::before {
    flex: 160;
  }

  .vertical .track::after {
    content: '';
    flex: 157;
  }

  .thumb {
    flex: 790;
    height: 10px;
    background: #a6a6a6;
  }

  .vertical .thumb {
    flex: 224;
    width: 10px;
    height: auto;
  }

  .chev {
    width: 4px;
    height: 4px;
    margin: 3px;
    box-sizing: border-box;
    border: solid #333;
    border-width: 1px 1px 0 0;
  }

  .chev.up {
    transform: rotate(-45deg);
  }

  .chev.right {
    transform: rotate(45deg);
  }

  .chev.down {
    transform: rotate(135deg);
  }

  .chev.left {
    transform: rotate(-135deg);
  }

  .dock {
    display: flex;
    align-items: flex-start;
    gap: 1px;
    padding: 2px 1px 0 2px;
  }

  .palette {
    display: flex;
    flex-direction: column;
    align-items: center;
    width: 16px;
    box-sizing: border-box;
    border: solid #bbb;
    border-width: 0 1px 1px 0;
    background: #f3f3f3;
  }

  .palette::before {
    content: '';
    width: 12px;
    height: 1px;
    margin: 1px 0 3px;
    background: #aaa;
  }

  .palette .tool {
    flex: 15;
    height: auto;
    min-height: 0;
  }

  .palette .sep {
    width: 12px;
    height: 1px;
    margin: 1px 0;
  }

  .palette .more {
    width: 10px;
    height: 9px;
    place-items: center end;
  }

  .parts {
    height: 265px;
  }

  .shapes {
    height: 244px;
  }

  .lamps {
    height: 91px;
    margin-top: 267px;
  }

  .coords {
    font-family: 'Liberation Mono', monospace;
    padding-right: 4px;
  }

  .mark {
    width: 11px;
    text-align: center;
  }

  .mark.wide {
    width: 24px;
  }

  .spin {
    display: flex;
    width: 35px;
    height: 14px;
    box-sizing: border-box;
    border: 1px solid #999;
    background: #fff;
  }

  .spin input {
    width: 21px;
    padding-left: 2px;
  }

  .steps {
    display: grid;
    width: 12px;
    background: #eee;
  }

  .steps button {
    display: grid;
    place-items: center;
    border: 1px solid #ccc;
  }

  .steps button::before {
    content: '';
    border: solid transparent;
    border-width: 0 2px 2px;
    border-bottom-color: #111;
  }

  .steps button:last-child::before {
    border-width: 2px 2px 0;
    border-color: #111 transparent transparent;
  }

  footer {
    display: flex;
    align-items: center;
    gap: 3px;
    height: 13px;
    margin-top: 1px;
    line-height: 11px;
    font-family: Lato, 'Noto Sans CJK JP', sans-serif;
  }

  .hint {
    flex: 1;
    padding-left: 2px;
  }

  .cell {
    padding: 0 1px;
    border: solid #aaa;
    border-width: 1px 0 0 1px;
    white-space: nowrap;
  }
</style>
